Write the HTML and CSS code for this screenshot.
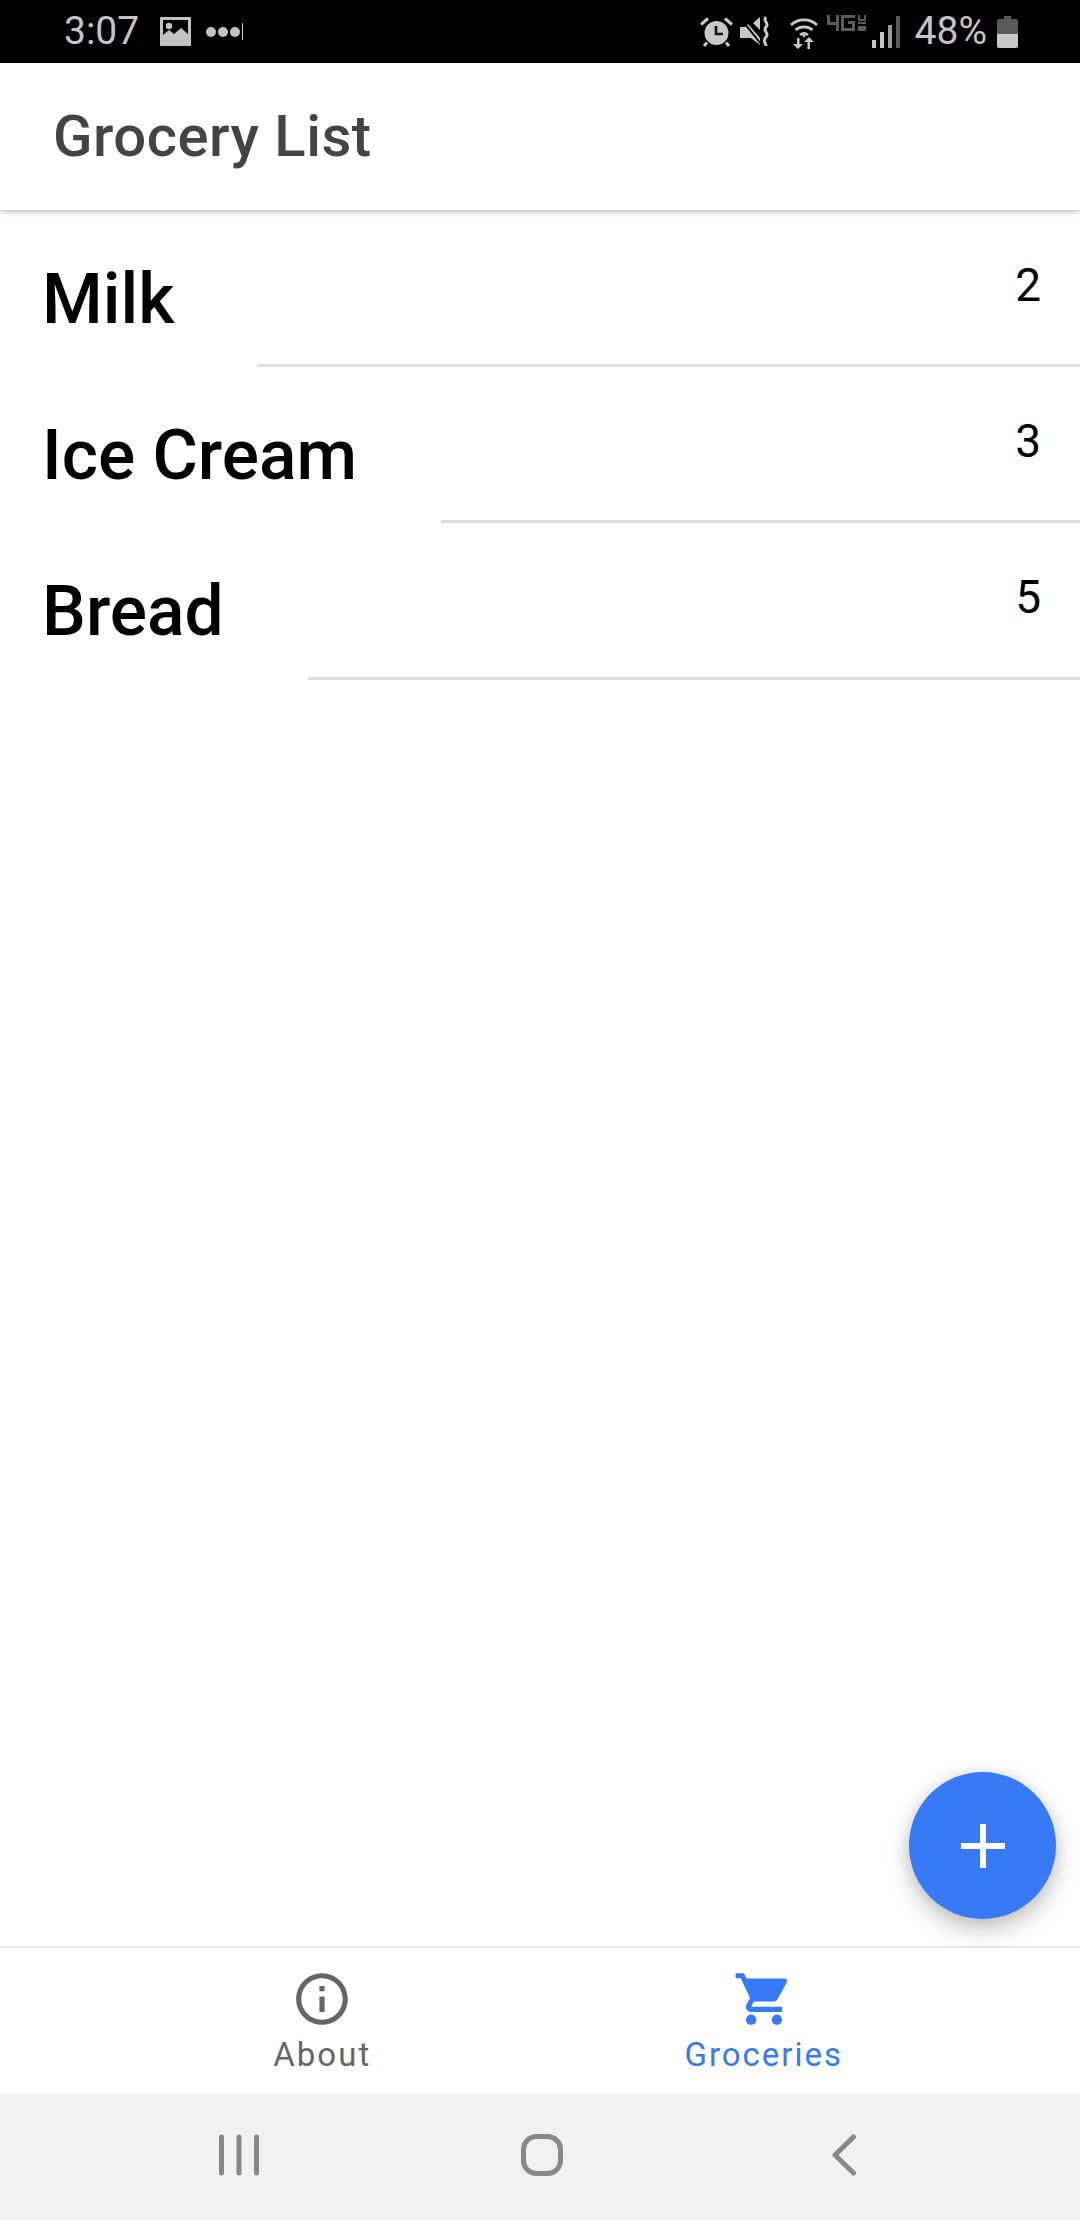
FILE: index.html
```html
<!DOCTYPE html>
<html lang="en">
<head>
<meta charset="utf-8">
<title>Grocery List</title>
<link rel="stylesheet" href="styles.css">
</head>
<body>
<div class="app">
  <div class="status">
    <div class="status-left">
      <span class="clock">3:07</span>
      <svg class="ic-image" viewBox="0 0 31 29"><path fill="#c2c2c2" fill-rule="evenodd" d="M1 0h29a1 1 0 0 1 1 1v27a1 1 0 0 1-1 1H1a1 1 0 0 1-1-1V1a1 1 0 0 1 1-1zM3 3v15l6-5 5 4 7-6 7 6V3z"/><circle cx="9" cy="9" r="3.200" fill="#c2c2c2"/></svg>
      <span class="dots"><i></i><i></i><i></i><b></b></span>
    </div>
    <div class="status-right">
      <svg class="ic-alarm" viewBox="0 0 33 32"><circle cx="16.500" cy="17" r="12" fill="#c8c8c8"/><path d="M16 10v8h7" fill="none" stroke="#111" stroke-width="2.600"/><path d="M1 8.500 8 2.500M32 8.500 25 2.500M7 26.500 4 30M26 26.500 29 30" stroke="#c8c8c8" stroke-width="3" fill="none"/></svg>
      <svg class="ic-mute" viewBox="0 0 32 32"><path fill="#c8c8c8" d="M0 11h5l3-3 12 14v7l-9-7H0zM13 7l7-6v13z"/><path d="M1 3l20 25" stroke="#000" stroke-width="2"/><path d="M26 1c-4 4 4 6 0 10s4 6 0 10-0 6 0 9" fill="none" stroke="#c8c8c8" stroke-width="3"/></svg>
      <svg class="ic-wifi" viewBox="0 0 28 34"><path d="M1 10a19 19 0 0 1 26 0M5.500 15a13 13 0 0 1 17 0M10 20a6.500 6.500 0 0 1 8 0" fill="none" stroke="#c8c8c8" stroke-width="2.600"/><path fill="#c8c8c8" d="M12 20h4l-2 3zM7 23h2.500v6H13l-5 5-5-5h4zM20 34h-2.500v-7H14l5-5 5 5h-4z"/></svg>
      <svg class="ic-lte" viewBox="0 0 39 18"><path fill="#5c5c5c" d="M0 0h3v7h6V0h3v16H9v-6H0zM14 0h14v3H17v10h8V9h-4V6h7v10H14zM31 0h2v4h4V0h2v6h-8zM31 7h8v2h-8zM31 11h8v5h-8z"/></svg>
      <svg class="ic-signal" viewBox="0 0 28 32"><path fill="#c8c8c8" d="M0 24h4v8H0zM8 16h4v16H8z"/><path fill="#9a9a9a" d="M16 9h4v23h-4z"/><path fill="#5c5c5c" d="M24 0h4v32h-4z"/></svg>
      <span class="pct">48%</span>
      <svg class="ic-battery" viewBox="0 0 21 32"><path fill="#5a5a5a" d="M7 0h7v3h5a2 2 0 0 1 2 2v13H0V5a2 2 0 0 1 2-2h5z"/><path fill="#c8c8c8" d="M0 18h21v12a2 2 0 0 1-2 2H2a2 2 0 0 1-2-2z"/></svg>
    </div>
  </div>

  <header class="appbar"><h1 class="title">Grocery List</h1></header>

  <main class="list">
    <div class="row"><span class="name">Milk</span><span class="qty">2</span></div>
    <div class="row"><span class="name">Ice Cream</span><span class="qty">3</span></div>
    <div class="row"><span class="name">Bread</span><span class="qty">5</span></div>
    <button class="fab" aria-label="Add">
      <svg viewBox="0 0 44 44"><path d="M19 0h6v19h19v6H25v19h-6V25H0v-6h19z" fill="#fff"/></svg>
    </button>
  </main>

  <nav class="tabs">
    <div class="tab">
      <svg class="tab-icon" viewBox="0 0 24 24"><path fill="#666" d="M11 7h2v2h-2zm0 4h2v6h-2zm1-9C6.480 2 2 6.480 2 12s4.480 10 10 10 10-4.480 10-10S17.520 2 12 2zm0 18c-4.410 0-8-3.590-8-8s3.590-8 8-8 8 3.590 8 8-3.590 8-8 8z"/></svg>
      <span class="tab-label">About</span>
    </div>
    <div class="tab tab-active">
      <svg class="tab-icon" viewBox="0 0 24 24"><path fill="#367bf5" d="M7 18c-1.100 0-1.990.9-1.990 2S5.900 22 7 22s2-.9 2-2-.9-2-2-2zM1 2v2h2l3.600 7.590-1.350 2.450c-.16.28-.25.61-.25.96 0 1.100.9 2 2 2h12v-2H7.420c-.14 0-.25-.11-.25-.25l.03-.12.9-1.630h7.450c.75 0 1.410-.41 1.750-1.030l3.580-6.470c.08-.14.12-.31.12-.48 0-.55-.45-1-1-1H5.210l-.94-2H1zm16 16c-1.100 0-1.990.9-1.990 2s.89 2 1.990 2 2-.9 2-2-.9-2-2-2z"/></svg>
      <span class="tab-label">Groceries</span>
    </div>
  </nav>

  <div class="sysnav">
    <svg class="sys-recent" viewBox="0 0 40 42"><path d="M2.500 3v36M20 3v36M37.500 3v36" stroke="#888" stroke-width="5" stroke-linecap="round" fill="none"/></svg>
    <svg class="sys-home" viewBox="0 0 42 42"><rect x="2.500" y="2.500" width="37" height="37" rx="13" fill="none" stroke="#888" stroke-width="5"/></svg>
    <svg class="sys-back" viewBox="0 0 24 42"><path d="M21.500 3 3 21l18.500 18" fill="none" stroke="#888" stroke-width="5" stroke-linecap="round" stroke-linejoin="round"/></svg>
  </div>
</div>
</body>
</html>
```
FILE: styles.css
```css
* { box-sizing: border-box; }
html, body { margin: 0; padding: 0; background: #fff; }
body { font-family: Roboto, "Liberation Sans", sans-serif; }
.app { width: 1080px; height: 2220px; display: flex; flex-direction: column; overflow: hidden; }

.status { height: 63px; background: #000; display: flex; justify-content: space-between; align-items: center; padding: 0 62px 0 64px; color: #c4c4c4; flex: none; }
.status-left, .status-right { display: flex; align-items: center; }
.clock { font-size: 39px; line-height: 63px; width: 96px; }
.ic-image { width: 31px; height: 29px; margin-right: 15px; }
.dots { display: flex; align-items: center; gap: 2px; }
.dots i { width: 10px; height: 10px; border-radius: 50%; background: #c4c4c4; }
.dots b { width: 1px; height: 17px; background: #c4c4c4; }
.ic-alarm { width: 33px; height: 32px; margin-right: 7px; }
.ic-mute { width: 32px; height: 32px; margin-right: 18px; }
.ic-wifi { width: 28px; height: 34px; margin-right: 9px; }
.ic-lte { width: 39px; height: 18px; margin-right: 6px; margin-top: -15px; }
.ic-signal { width: 28px; height: 32px; margin-right: 15px; }
.pct { font-size: 39px; line-height: 63px; margin-right: 10px; }
.ic-battery { width: 21px; height: 32px; }

.appbar { height: 147px; background: #fff; display: flex; align-items: center; padding: 0 0 2px 53px; box-shadow: 0 2px 5px rgba(0,0,0,.26); position: relative; z-index: 1; flex: none; }
.title { margin: 0; font-size: 58px; font-weight: 500; letter-spacing: .5px; color: #444; line-height: 1; }

.list { flex: 1; position: relative; background: #fff; padding-top: .5px; }
.row { display: flex; height: 156.400px; }
.name { font-size: 69.500px; font-weight: 500; color: #000; line-height: 82px; padding: 48px 84px 0 42px; }
.qty { flex: 1; text-align: right; font-size: 46px; line-height: 53px; color: #000; padding: 48px 39px 0 0; border-bottom: 3px solid #ddd; }

.fab { position: absolute; left: 909px; top: 1562px; width: 147px; height: 147px; border: 0; border-radius: 50%; background: #367bf5; padding: 0; display: flex; align-items: center; justify-content: center; box-shadow: 0 10px 24px rgba(0,0,0,.24), 0 0 14px rgba(0,0,0,.08); }
.fab svg { width: 44px; height: 44px; display: block; }

.tabs { height: 148px; flex: none; background: #fff; border-top: 2px solid #e8e8e8; display: flex; padding: 0 95.500px 0 101.500px; }
.tab { flex: 1; display: flex; flex-direction: column; align-items: center; padding-top: 20px; color: #666; }
.tab-icon { width: 62px; height: 62px; display: block; }
.tab-label { font-size: 33px; line-height: 38px; letter-spacing: 2px; margin-top: 6px; }
.tab-active { color: #367bf5; }

.sysnav { height: 126px; flex: none; background: #f1f1f1; display: flex; align-items: center; padding: 0 0 4px 219px; }
.sys-recent { width: 40px; height: 42px; }
.sys-home { width: 42px; height: 42px; margin-left: 262px; }
.sys-back { width: 24px; height: 42px; margin-left: 269px; }
```
